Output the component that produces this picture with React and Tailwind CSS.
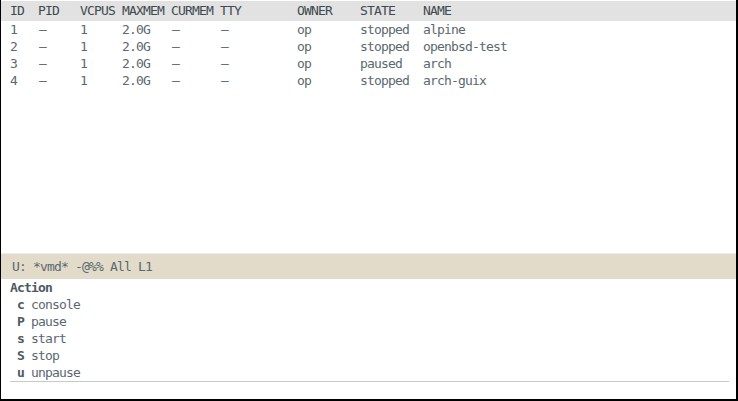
const vms = [
  { id: '1', vcpus: '1', maxmem: '2.0G', owner: 'op', state: 'stopped', name: 'alpine' },
  { id: '2', vcpus: '1', maxmem: '2.0G', owner: 'op', state: 'stopped', name: 'openbsd-test' },
  { id: '3', vcpus: '1', maxmem: '2.0G', owner: 'op', state: 'paused', name: 'arch' },
  { id: '4', vcpus: '1', maxmem: '2.0G', owner: 'op', state: 'stopped', name: 'arch-guix' },
];

const actions = [
  ['c', 'console'],
  ['P', 'pause'],
  ['s', 'start'],
  ['S', 'stop'],
  ['u', 'unpause'],
];

const cols = 'grid grid-cols-[28px_42px_42px_49px_49px_77px_63px_63px_1fr] items-center';

const App = () => {
  return (
    <div
      className="w-[738px] h-[401px] flex flex-col bg-white border-l border-r-2 border-b-2 border-black pt-px overflow-hidden text-[13px] tracking-[-0.83px] whitespace-pre"
      style={{ fontFamily: '"DejaVu Sans Mono", "Liberation Mono", monospace' }}
    >
      {/* vm list */}
      <div className="flex-1 flex flex-col">
        <div className={`${cols} h-[20px] bg-[#e2e2e2] pl-[9px] text-[#3f4a50]`}>
          <span>ID</span>
          <span>PID</span>
          <span>VCPUS</span>
          <span>MAXMEM</span>
          <span>CURMEM</span>
          <span>TTY</span>
          <span>OWNER</span>
          <span>STATE</span>
          <span>NAME</span>
        </div>
        {vms.map((vm) => (
          <div key={vm.id} className={`${cols} h-[17px] pl-[9px] text-[#5a6870] leading-[15px]`}>
            <span>{vm.id}</span>
            <span className="pl-px">–</span>
            <span>{vm.vcpus}</span>
            <span>{vm.maxmem}</span>
            <span className="pl-px">–</span>
            <span className="pl-px">–</span>
            <span>{vm.owner}</span>
            <span>{vm.state}</span>
            <span>{vm.name}</span>
          </div>
        ))}
      </div>

      {/* mode line */}
      <div className="h-px bg-[#ebebeb]" />
      <div className="h-[25px] flex items-center bg-[#e2dbc9] pl-[11px] text-[#5a6870]">
        U: *vmd* -@%% All L1
      </div>

      {/* transient menu */}
      <div className="h-[120px] flex flex-col pl-[9px] text-[#5a6870]">
        <div className="h-[17px] flex items-center font-bold text-[#4d5a61]">Action</div>
        {actions.map(([key, label]) => (
          <div key={key} className="h-[17px] flex items-center">
            <span> </span>
            <span className="font-bold text-[#4d5a61]">{key}</span>
            <span> {label}</span>
          </div>
        ))}
        <div className="mr-[7px] h-px bg-[#c8c8c8]" />
      </div>
    </div>
  );
};

export default App;
